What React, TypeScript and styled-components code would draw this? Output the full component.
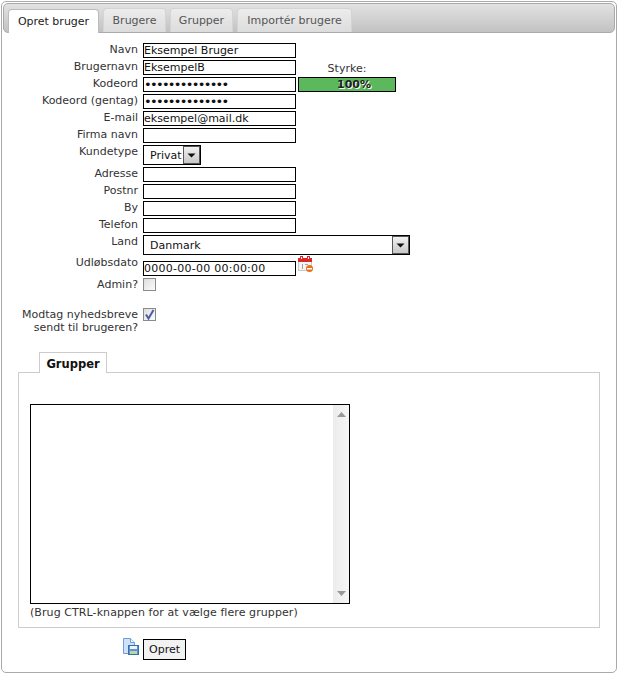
import React from "react";
import styled, { createGlobalStyle } from "styled-components";

const GlobalStyle = createGlobalStyle`
  html, body {
    margin: 0;
    padding: 0;
    background: #fff;
  }
  body {
    font-family: "DejaVu Sans", Verdana, sans-serif;
    font-size: 11px;
    color: #333;
  }
`;

const TABS = [
  { name: "Opret bruger", width: 91 },
  { name: "Brugere", width: 63 },
  { name: "Grupper", width: 63 },
  { name: "Importér brugere", width: 115 },
];

const Page = styled.div`
  box-sizing: border-box;
  width: 616px;
  height: 672px;
  margin: 1px 0 0 1px;
  padding: 1px;
  border: 1px solid #aaa;
  border-radius: 5px;
`;

const TabBar = styled.div`
  box-sizing: border-box;
  display: flex;
  align-items: flex-end;
  gap: 4px;
  height: 30px;
  padding: 0 0 0 4px;
  background: linear-gradient(#e2e2e2, #c2c2c2);
  border: 1px solid #aaa;
  border-radius: 5px;
`;

const Tab = styled.div<{ $active?: boolean; $width: number }>`
  box-sizing: border-box;
  width: ${(p) => p.$width}px;
  height: 24px;
  display: flex;
  align-items: center;
  justify-content: center;
  border-radius: 4px 4px 0 0;
  font-size: 11px;
  color: ${(p) => (p.$active ? "#222" : "#555")};
  background: ${(p) => (p.$active ? "#fff" : "linear-gradient(#ececec, #dcdcdc)")};
  border: 1px solid ${(p) => (p.$active ? "#bbb" : "#d4d4d4")};
  border-bottom: none;
  margin-bottom: ${(p) => (p.$active ? "-1px" : "0")};
`;

const Form = styled.div`
  display: grid;
  grid-template-columns: 140px 153px 100px 1fr;
  grid-template-rows: repeat(6, 17px) 22px repeat(4, 17px) 21px 22px 30px 40px;
  margin-top: 10px;
`;

const Label = styled.div`
  grid-column: 1;
  padding-right: 5px;
  text-align: right;
  font-size: 11px;
  line-height: 13px;
  color: #333;
`;

const Input = styled.div<{ $password?: boolean }>`
  grid-column: 2;
  box-sizing: border-box;
  height: 15px;
  border: 1px solid #000;
  font-size: ${(p) => (p.$password ? "13px" : "11px")};
  line-height: 13px;
  letter-spacing: ${(p) => (p.$password ? "-1.7px" : "0")};
  color: #111;
  white-space: nowrap;
  overflow: hidden;
`;

const Strength = styled.div`
  grid-column: 3;
  grid-row: 2;
  align-self: end;
  padding: 0 0 2px 2px;
  text-align: center;
  font-size: 11px;
  line-height: 12px;
`;

const StrengthBar = styled.div`
  grid-column: 3;
  grid-row: 3;
  box-sizing: border-box;
  width: 98px;
  height: 15px;
  margin-left: 2px;
  padding-left: 14px;
  background: #5cb85c;
  border: 1px solid #000;
  text-align: center;
  font-size: 11px;
  font-weight: bold;
  line-height: 13px;
  color: #222;
  text-shadow: 1px 1px 0 #fff;
`;

const Select = styled.div<{ $wide?: boolean }>`
  grid-column: ${(p) => (p.$wide ? "2 / span 3" : "2")};
  box-sizing: border-box;
  width: ${(p) => (p.$wide ? "267px" : "58px")};
  height: 20px;
  border: 1px solid #000;
  display: flex;
  align-items: center;
  justify-content: space-between;
  padding: 0 0 0 6px;
  font-size: 11px;
  color: #111;
`;

const SelectButton = styled.div`
  box-sizing: border-box;
  width: 17px;
  height: 18px;
  display: flex;
  align-items: center;
  justify-content: center;
  background: linear-gradient(#f0f0f0, #c8c8c8);
  border: 1px solid #555;
`;

const DateCell = styled.div`
  grid-column: 2 / span 2;
  display: flex;
  align-items: flex-start;
  gap: 2px;
`;

const DateInput = styled(Input)`
  width: 153px;
  flex: none;
  margin-top: 5px;
  letter-spacing: 0.25px;
`;

const CheckBox = styled.div`
  grid-column: 2;
  box-sizing: border-box;
  width: 13px;
  height: 13px;
  border: 1px solid #8a8a8a;
  background: linear-gradient(135deg, #dedede, #fbfbfb);
  display: flex;
  align-items: center;
  justify-content: center;
`;

const GroupSection = styled.div`
  margin: 4px 15px 0 15px;
`;

const GroupTab = styled.div`
  box-sizing: border-box;
  width: 68px;
  height: 21px;
  margin: 0 0 -1px 21px;
  position: relative;
  background: #fff;
  border: 1px solid #ccc;
  border-bottom: none;
  text-align: center;
  font-size: 11.5px;
  font-weight: bold;
  line-height: 22px;
  color: #111;
`;

const GroupPanel = styled.div`
  box-sizing: border-box;
  height: 256px;
  padding: 31px 0 0 11px;
  border: 1px solid #ccc;
`;

const ListBox = styled.div`
  box-sizing: border-box;
  width: 320px;
  height: 200px;
  border: 1px solid #000;
  display: flex;
  justify-content: flex-end;
`;

const ScrollTrack = styled.div`
  box-sizing: border-box;
  width: 16px;
  padding: 7px 0;
  background: linear-gradient(90deg, #ececec, #f6f6f6);
  display: flex;
  flex-direction: column;
  justify-content: space-between;
  align-items: center;
`;

const Hint = styled.div`
  margin-top: 2px;
  font-size: 11px;
  line-height: 13px;
  letter-spacing: 0.08px;
  color: #333;
`;

const Actions = styled.div`
  display: flex;
  align-items: flex-start;
  gap: 4px;
  margin: 11px 0 0 119px;
`;

const SaveIcon = styled.svg`
  margin-top: -1px;
`;

const SubmitButton = styled.div`
  box-sizing: border-box;
  width: 43px;
  height: 21px;
  background: #f2f2f2;
  border: 1px solid #000;
  text-align: center;
  font-size: 11px;
  line-height: 19px;
  color: #111;
`;

const Arrow = () => (
  <svg width="9" height="5" viewBox="0 0 9 5">
    <path d="M0.5 0.5h8L4.5 4.5z" fill="#111" />
  </svg>
);

const ScrollArrow = ({ down }: { down?: boolean }) => (
  <svg width="9" height="5" viewBox="0 0 9 5">
    <path d={down ? "M0 0h9L4.5 5z" : "M0 5h9L4.5 0z"} fill="#999" />
  </svg>
);

const CalendarIcon = () => (
  <svg width="16" height="17" viewBox="0 0 16 17">
    <rect x="0.5" y="2.5" width="13" height="12" fill="#f4f4f4" stroke="#c8c8c8" />
    <rect x="0" y="2" width="14" height="4" fill="#d62a2a" />
    <rect x="2" y="0" width="3" height="4" fill="#d62a2a" />
    <rect x="9" y="0" width="3" height="4" fill="#d62a2a" />
    <rect x="3" y="1" width="1" height="2" fill="#fff" />
    <rect x="10" y="1" width="1" height="2" fill="#fff" />
    <rect x="4" y="8" width="1" height="5" fill="#a0a0a0" />
    <rect x="7" y="8" width="3" height="1" fill="#a0a0a0" />
    <circle cx="11.5" cy="12.5" r="3.5" fill="#e8701a" />
    <rect x="9" y="12" width="5" height="1.5" fill="#fff" />
  </svg>
);

const Check = () => (
  <svg width="11" height="11" viewBox="0 0 11 11">
    <path d="M2 5.5L4.5 9.5L9.5 1" fill="none" stroke="#4a5fa5" strokeWidth="2" />
  </svg>
);

const App: React.FC = () => (
  <Page>
    <GlobalStyle />
    <TabBar>
      {TABS.map((tab, i) => (
        <Tab key={tab.name} $active={i === 0} $width={tab.width}>
          {tab.name}
        </Tab>
      ))}
    </TabBar>
    <Form>
      <Label>Navn</Label>
      <Input>Eksempel Bruger</Input>
      <Label>Brugernavn</Label>
      <Input>EksempelB</Input>
      <Strength>Styrke:</Strength>
      <Label>Kodeord</Label>
      <Input $password>{"•".repeat(14)}</Input>
      <StrengthBar>100%</StrengthBar>
      <Label>Kodeord (gentag)</Label>
      <Input $password>{"•".repeat(14)}</Input>
      <Label>E-mail</Label>
      <Input>eksempel@mail.dk</Input>
      <Label>Firma navn</Label>
      <Input />
      <Label>Kundetype</Label>
      <Select>
        Privat
        <SelectButton>
          <Arrow />
        </SelectButton>
      </Select>
      <Label>Adresse</Label>
      <Input />
      <Label>Postnr</Label>
      <Input />
      <Label>By</Label>
      <Input />
      <Label>Telefon</Label>
      <Input />
      <Label>Land</Label>
      <Select $wide>
        Danmark
        <SelectButton>
          <Arrow />
        </SelectButton>
      </Select>
      <Label>Udløbsdato</Label>
      <DateCell>
        <DateInput>0000-00-00 00:00:00</DateInput>
        <CalendarIcon />
      </DateCell>
      <Label>Admin?</Label>
      <CheckBox />
      <Label>
        Modtag nyhedsbreve
        <br />
        sendt til brugeren?
      </Label>
      <CheckBox>
        <Check />
      </CheckBox>
    </Form>
    <GroupSection>
      <GroupTab>Grupper</GroupTab>
      <GroupPanel>
        <ListBox>
          <ScrollTrack>
            <ScrollArrow />
            <ScrollArrow down />
          </ScrollTrack>
        </ListBox>
        <Hint>(Brug CTRL-knappen for at vælge flere grupper)</Hint>
      </GroupPanel>
    </GroupSection>
    <Actions>
      <SaveIcon width="17" height="17" viewBox="0 0 17 17">
        <path d="M1.5 0.5h7l4 4v3h-4v8h-7z" fill="#cfe2f7" stroke="#6f9fd8" />
        <path d="M8.5 0.5v4h4" fill="#eef5fd" stroke="#6f9fd8" />
        <rect x="6.5" y="7.5" width="10" height="9" fill="#5f95d6" stroke="#3a6cab" />
        <rect x="8" y="8" width="7" height="3" fill="#eef4fb" />
        <rect x="8" y="13" width="7" height="3" fill="#b4dc9c" />
      </SaveIcon>
      <SubmitButton>Opret</SubmitButton>
    </Actions>
  </Page>
);

export default App;
